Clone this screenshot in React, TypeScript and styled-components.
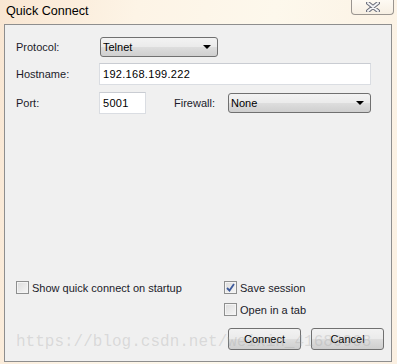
import React from 'react';
import styled, { createGlobalStyle } from 'styled-components';

const GlobalStyle = createGlobalStyle`
  html, body {
    margin: 0;
    padding: 0;
  }
  body {
    font-family: "Liberation Sans", Arial, sans-serif;
  }
`;

const Window = styled.div`
  position: relative;
  width: 397px;
  height: 364px;
  box-sizing: border-box;
  padding: 0 5px 2px 4px;
  display: flex;
  flex-direction: column;
  background: linear-gradient(100deg, #f9e6d2 0%, #fdf4e6 30%, #fdf8ec 60%, #fbf0e2 100%);
`;

const TitleBar = styled.div`
  height: 24px;
  display: flex;
  align-items: flex-start;
  justify-content: space-between;
`;

const Title = styled.span`
  font-size: 12.6px;
  color: #000;
  padding: 4px 0 0 2px;
`;

const CloseButton = styled.div`
  width: 43px;
  height: 15px;
  margin-right: -2px;
  box-sizing: border-box;
  border: 1px solid #9a9590;
  border-top: none;
  border-radius: 0 0 4px 4px;
  background: linear-gradient(#fefaf3, #f7efe3);
  display: flex;
  align-items: center;
  justify-content: center;
`;

const Client = styled.div`
  position: relative;
  flex: 1;
  box-sizing: border-box;
  border: 1px solid #8e8e8e;
  background: #f0f0f0;
  padding: 12px 7px 11px 11px;
  display: flex;
  flex-direction: column;
  color: #1b1b2a;
  font-size: 11px;
`;

const Form = styled.div`
  display: flex;
  flex-direction: column;
  gap: 6px;
`;

const Row = styled.div<{ $h: number }>`
  display: flex;
  align-items: center;
  height: ${(p) => p.$h}px;
`;

const Label = styled.span<{ $w: number }>`
  width: ${(p) => p.$w}px;
  flex-shrink: 0;
`;

const Combo = styled.div<{ $w: number }>`
  width: ${(p) => p.$w}px;
  height: 20px;
  box-sizing: border-box;
  border: 1px solid #707070;
  border-radius: 3px;
  background: linear-gradient(#f3f3f3 0%, #ebebeb 48%, #dddddd 52%, #cfcfcf 100%);
  display: flex;
  align-items: center;
  justify-content: space-between;
  padding: 0 6px 0 2px;
  color: #000;
`;

const Arrow = styled.span`
  width: 0;
  height: 0;
  border-left: 4px solid transparent;
  border-right: 4px solid transparent;
  border-top: 4px solid #000;
`;

const TextBox = styled.div<{ $w: number }>`
  width: ${(p) => p.$w}px;
  height: 22px;
  box-sizing: border-box;
  border: 1px solid #dadde2;
  border-top-color: #c9ccd2;
  background: #fff;
  display: flex;
  align-items: center;
  padding-left: 3px;
  color: #000;
  letter-spacing: 0.3px;
`;

const Bottom = styled.div`
  margin-top: auto;
  display: flex;
`;

const LeftCol = styled.div`
  width: 208px;
  flex-shrink: 0;
`;

const RightCol = styled.div`
  flex: 1;
  display: flex;
  flex-direction: column;
  gap: 9px;
`;

const Check = styled.label`
  display: flex;
  align-items: center;
  gap: 3px;
  height: 13px;
`;

const Box = styled.span<{ $checked?: boolean }>`
  width: 13px;
  height: 13px;
  box-sizing: border-box;
  border: 1px solid #8e8f8f;
  background: linear-gradient(135deg, #dcdcdc, #f6f6f6);
  box-shadow: inset 0 0 0 1px #f4f4f4;
  display: flex;
  align-items: center;
  justify-content: center;
  flex-shrink: 0;
`;

const Buttons = styled.div`
  display: flex;
  gap: 10px;
  justify-content: flex-end;
  margin-top: 3px;
`;

const Button = styled.div`
  width: 73px;
  height: 22px;
  box-sizing: border-box;
  border: 1px solid #707070;
  border-radius: 3px;
  background: linear-gradient(#f2f2f2 0%, #ebebeb 48%, #dddddd 52%, #cfcfcf 100%);
  display: flex;
  align-items: center;
  justify-content: center;
  color: #000;
`;

const Watermark = styled.div`
  position: absolute;
  left: 11px;
  bottom: 10px;
  font-family: "Liberation Mono", "Courier New", monospace;
  font-size: 16px;
  color: rgba(160, 160, 160, 0.3);
  white-space: nowrap;
  pointer-events: none;
`;

function CloseIcon() {
  return (
    <svg width="14" height="10" viewBox="0 0 14 10">
      <path d="M2 1 L12 9 M12 1 L2 9" stroke="#6b6e7a" strokeWidth="4" strokeLinecap="round" />
      <path d="M2 1 L12 9 M12 1 L2 9" stroke="#f4f4f6" strokeWidth="2" strokeLinecap="round" />
    </svg>
  );
}

function CheckMark() {
  return (
    <svg width="9" height="9" viewBox="0 0 9 9">
      <path d="M1 5 L3.5 7.5 L8 1" stroke="#3d5a9c" strokeWidth="1.8" fill="none" />
    </svg>
  );
}

function App(): JSX.Element {
  return (
    <Window>
      <GlobalStyle />
      <TitleBar>
        <Title>Quick Connect</Title>
        <CloseButton>
          <CloseIcon />
        </CloseButton>
      </TitleBar>
      <Client>
        <Form>
          <Row $h={20}>
            <Label $w={84}>Protocol:</Label>
            <Combo $w={118}>
              <span>Telnet</span>
              <Arrow />
            </Combo>
          </Row>
          <Row $h={22}>
            <Label $w={83}>Hostname:</Label>
            <TextBox $w={272}>192.168.199.222</TextBox>
          </Row>
          <Row $h={22} style={{ marginTop: 1 }}>
            <Label $w={83}>Port:</Label>
            <TextBox $w={47}>5001</TextBox>
            <Label $w={54} style={{ marginLeft: 28 }}>Firewall:</Label>
            <Combo $w={143}>
              <span>None</span>
              <Arrow />
            </Combo>
          </Row>
        </Form>
        <Bottom>
          <LeftCol>
            <Check>
              <Box />
              Show quick connect on startup
            </Check>
          </LeftCol>
          <RightCol>
            <Check>
              <Box $checked>
                <CheckMark />
              </Box>
              Save session
            </Check>
            <Check>
              <Box />
              Open in a tab
            </Check>
            <Buttons>
              <Button>Connect</Button>
              <Button>Cancel</Button>
            </Buttons>
          </RightCol>
        </Bottom>
        <Watermark>https://blog.csdn.net/weixin_41680968</Watermark>
      </Client>
    </Window>
  );
}

export default App;
